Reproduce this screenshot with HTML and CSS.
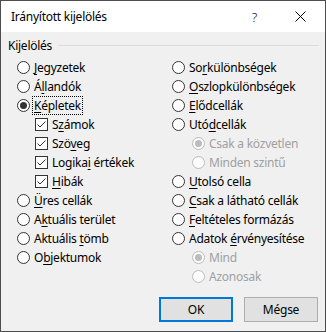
FILE: index.html
```html
<!DOCTYPE html>
<html lang="hu">
<head>
  <meta charset="UTF-8" />
  <title>Irányított kijelölés</title>
  <link rel="stylesheet" href="styles.css">
</head>
<body>

<div class="dialog">
  <div class="titlebar">
    <span class="title">Irányított kijelölés</span>
    <span class="tbtn help">?</span>
    <span class="tbtn close">
      <svg width="11" height="11" viewBox="0 0 11 11"><path d="M0.5 0.5 L10.5 10.5 M10.5 0.5 L0.5 10.5" stroke="#000" stroke-width="1" fill="none"/></svg>
    </span>
  </div>

  <div class="content">
    <div class="group-head"><span>Kijelölés</span><i class="rule"></i></div>

    <div class="cols">
      <div class="col">
        <div class="opt"><span class="radio"></span><span><u>J</u>egyzetek</span></div>
        <div class="opt"><span class="radio"></span><span>Á<u>l</u>landók</span></div>
        <div class="opt"><span class="radio on"></span><span class="focus"><u>K</u>épletek</span></div>
        <div class="opt sub"><span class="check"><svg width="11" height="11" viewBox="0 0 11 11"><path d="M1.5 5.5 L4 8 L9.5 2.5" stroke="#333" stroke-width="1" fill="none"/></svg></span><span>S<u>z</u>ámok</span></div>
        <div class="opt sub"><span class="check"><svg width="11" height="11" viewBox="0 0 11 11"><path d="M1.5 5.5 L4 8 L9.5 2.5" stroke="#333" stroke-width="1" fill="none"/></svg></span><span>Szö<u>v</u>eg</span></div>
        <div class="opt sub"><span class="check"><svg width="11" height="11" viewBox="0 0 11 11"><path d="M1.5 5.5 L4 8 L9.5 2.5" stroke="#333" stroke-width="1" fill="none"/></svg></span><span>Logika<u>i</u> értékek</span></div>
        <div class="opt sub"><span class="check"><svg width="11" height="11" viewBox="0 0 11 11"><path d="M1.5 5.5 L4 8 L9.5 2.5" stroke="#333" stroke-width="1" fill="none"/></svg></span><span><u>H</u>ibák</span></div>
        <div class="opt"><span class="radio"></span><span><u>Ü</u>res cellák</span></div>
        <div class="opt"><span class="radio"></span><span>A<u>k</u>tuális terület</span></div>
        <div class="opt"><span class="radio"></span><span>Aktuális <u>t</u>ömb</span></div>
        <div class="opt"><span class="radio"></span><span>O<u>b</u>jektumok</span></div>
      </div>

      <div class="col">
        <div class="opt"><span class="radio"></span><span>So<u>r</u>különbségek</span></div>
        <div class="opt"><span class="radio"></span><span><u>O</u>szlopkülönbségek</span></div>
        <div class="opt"><span class="radio"></span><span><u>E</u>lődcellák</span></div>
        <div class="opt"><span class="radio"></span><span>Utó<u>d</u>cellák</span></div>
        <div class="opt sub2 off"><span class="radio on"></span><span>Csak a közvetlen</span></div>
        <div class="opt sub2 off"><span class="radio"></span><span>Minden szintű</span></div>
        <div class="opt"><span class="radio"></span><span><u>U</u>tolsó cella</span></div>
        <div class="opt"><span class="radio"></span><span><u>C</u>sak a látható cellák</span></div>
        <div class="opt"><span class="radio"></span><span><u>F</u>eltételes formázás</span></div>
        <div class="opt"><span class="radio"></span><span>Adatok <u>é</u>rvényesítése</span></div>
        <div class="opt sub2 off"><span class="radio on"></span><span>Mind</span></div>
        <div class="opt sub2 off"><span class="radio"></span><span>Azonosak</span></div>
      </div>
    </div>

    <div class="actions">
      <button class="btn primary">OK</button>
      <button class="btn">Mégse</button>
    </div>
  </div>
</div>

</body>
</html>
```

FILE: styles.css
```css
* { box-sizing: border-box; }
body {
  margin: 0;
  font-family: 'Noto Sans', 'Liberation Sans', sans-serif;
  font-size: 12px;
  letter-spacing: -0.25px;
  color: #000;
  background: #fff;
}
.dialog {
  width: 326px;
  height: 332px;
  border: 1px solid #4d4d4d;
  background: #f0f0f0;
  display: flex;
  flex-direction: column;
}
.titlebar {
  height: 31px;
  background: #fff;
  display: flex;
  align-items: center;
  padding-left: 10px;
  padding-right: 2px;
}
.title { flex: 1; }
.tbtn {
  width: 45px;
  height: 31px;
  display: flex;
  align-items: center;
  justify-content: center;
}
.help { font-size: 13px; font-weight: 300; }
.close { width: 46px; }
.content {
  flex: 1;
  display: flex;
  flex-direction: column;
}
.group-head {
  height: 26px;
  display: flex;
  align-items: center;
  padding: 0 6px 0 7px;
}
.group-head .rule {
  flex: 1;
  height: 1px;
  background: #dcdcdc;
  margin-left: 6px;
}
.cols {
  display: grid;
  grid-template-columns: 155px 1fr;
  padding-left: 16px;
}
.opt {
  height: 19px;
  display: flex;
  align-items: center;
  white-space: nowrap;
}
.opt u { text-underline-offset: 2px; }
.sub { padding-left: 18px; }
.sub2 { padding-left: 20px; }
.radio {
  width: 13px;
  height: 13px;
  border: 1px solid #333;
  border-radius: 50%;
  background: #fff;
  margin-right: 4px;
  flex: none;
  display: flex;
  align-items: center;
  justify-content: center;
}
.radio.on::after {
  content: "";
  width: 7px;
  height: 7px;
  border-radius: 50%;
  background: #333;
}
.off { color: #a0a0a0; }
.off .radio { border-color: #bcbcbc; background: #fcfcfc; }
.off .radio.on::after { background: #bcbcbc; }
.check {
  width: 13px;
  height: 13px;
  border: 1px solid #333;
  background: #fff;
  margin-right: 4px;
  flex: none;
  display: flex;
}
.focus {
  outline: 1px dotted #000;
  padding: 0 1px;
  margin-left: -1px;
}
.actions {
  display: flex;
  justify-content: flex-end;
  gap: 11px;
  padding: 11px 7px 0 0;
}
.btn {
  width: 74px;
  height: 25px;
  font: inherit;
  letter-spacing: inherit;
  color: #000;
  background: #e1e1e1;
  border: 1px solid #adadad;
  padding: 0;
}
.primary { border: 2px solid #0078d7; }
```
